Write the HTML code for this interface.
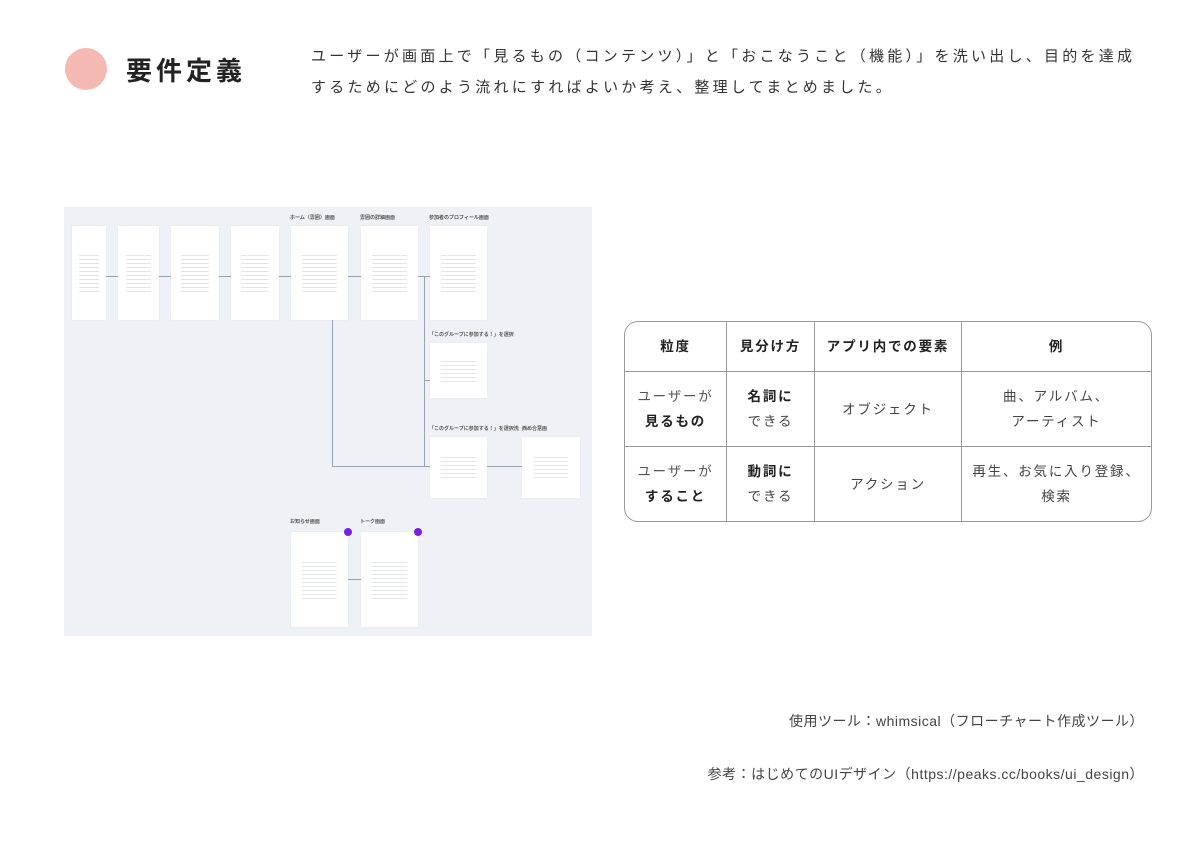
<!DOCTYPE html>
<html><head><meta charset="utf-8"><style>
body{margin:0;width:1200px;height:848px;background:#fff;position:relative;overflow:hidden;font-family:"Liberation Sans","Noto Sans CJK JP",sans-serif;color:#333}
.a{position:absolute}
.circ{left:65px;top:48px;width:42px;height:42px;border-radius:50%;background:#f4b9b2}
.title{left:126px;top:53px;font-size:26px;font-weight:bold;letter-spacing:4px;color:#222;line-height:36px}
.lead{left:311px;top:41px;font-size:15px;letter-spacing:3.25px;line-height:31px;color:#333;white-space:nowrap}
.dia{left:64px;top:207px;width:528px;height:429px;background:#eef2f6}
.card{position:absolute;background:#fff;box-shadow:0 0 1px rgba(0,0,0,.08)}
.card::after{content:"";position:absolute;left:20%;right:20%;top:28%;bottom:28%;background:repeating-linear-gradient(#fff 0 3px,#e2e4e8 3px 4px)}
.lbl{position:absolute;font-size:5px;color:#555;font-weight:bold}
.ln{position:absolute;background:#9aa3ad}
.dot{position:absolute;width:8px;height:8px;border-radius:50%;background:#7b1fe0}
table{position:absolute;left:624px;top:321px;width:528px;border-collapse:separate;border-spacing:0;border:1px solid #999;border-radius:14px;font-size:13.5px;letter-spacing:1.8px;table-layout:fixed}
td{border-right:1px solid #999;border-bottom:1px solid #999;text-align:center;line-height:25px;color:#444;padding:0}
tr td:last-child{border-right:none}
tr:last-child td{border-bottom:none}
.h td{height:49px;font-weight:bold;color:#222}
.r td{height:74px}
.foot{right:56px;font-size:14px;color:#444;letter-spacing:.5px;white-space:nowrap}
</style></head><body>
<div class="a circ"></div>
<div class="a title">要件定義</div>
<div class="a lead">ユーザーが画面上で「見るもの（コンテンツ）」と「おこなうこと（機能）」を洗い出し、目的を達成<br>するためにどのよう流れにすればよいか考え、整理してまとめました。</div>
<div class="a dia">
 <div class="ln" style="left:42px;top:69px;width:200px;height:1px"></div>
 <div class="ln" style="left:284px;top:69px;width:90px;height:1px"></div>
 <div class="ln" style="left:268px;top:113px;width:1px;height:147px"></div>
 <div class="ln" style="left:268px;top:259px;width:98px;height:1px"></div>
 <div class="ln" style="left:360px;top:69px;width:1px;height:191px"></div>
 <div class="ln" style="left:360px;top:173px;width:6px;height:1px"></div>
 <div class="ln" style="left:423px;top:259px;width:35px;height:1px"></div>
 <div class="ln" style="left:284px;top:372px;width:14px;height:1px"></div>
 <div class="card" style="left:8px;top:19px;width:34px;height:94px"></div>
 <div class="card" style="left:54px;top:19px;width:41px;height:94px"></div>
 <div class="card" style="left:107px;top:19px;width:48px;height:94px"></div>
 <div class="card" style="left:167px;top:19px;width:48px;height:94px"></div>
 <div class="card" style="left:227px;top:19px;width:57px;height:94px"></div>
 <div class="card" style="left:297px;top:19px;width:57px;height:94px"></div>
 <div class="card" style="left:366px;top:19px;width:57px;height:94px"></div>
 <div class="card" style="left:366px;top:136px;width:57px;height:55px"></div>
 <div class="card" style="left:366px;top:230px;width:57px;height:61px"></div>
 <div class="card" style="left:458px;top:230px;width:58px;height:61px"></div>
 <div class="card" style="left:227px;top:325px;width:57px;height:95px"></div>
 <div class="card" style="left:297px;top:325px;width:57px;height:95px"></div>
 <div class="dot" style="left:280px;top:321px"></div>
 <div class="dot" style="left:350px;top:321px"></div>
 <div class="lbl" style="left:226px;top:7px">ホーム（雰囲）画面</div>
 <div class="lbl" style="left:296px;top:7px">雰囲の詳細画面</div>
 <div class="lbl" style="left:365px;top:7px">参加者のプロフィール画面</div>
 <div class="lbl" style="left:365px;top:124px">「このグループに参加する！」を選択</div>
 <div class="lbl" style="left:365px;top:218px">「このグループに参加する！」を選択洗</div>
 <div class="lbl" style="left:458px;top:218px">西め合意画</div>
 <div class="lbl" style="left:226px;top:311px">お知らせ画面</div>
 <div class="lbl" style="left:296px;top:311px">トーク画面</div>
</div>
<table>
<tr class="h"><td style="width:101px">粒度</td><td style="width:87px">見分け方</td><td style="width:146px">アプリ内での要素</td><td>例</td></tr>
<tr class="r"><td><span style="color:#555">ユーザーが</span><br><b style="color:#222">見るもの</b></td><td><b style="color:#222">名詞に</b><br>できる</td><td>オブジェクト</td><td>曲、アルバム、<br>アーティスト</td></tr>
<tr class="r"><td><span style="color:#555">ユーザーが</span><br><b style="color:#222">すること</b></td><td><b style="color:#222">動詞に</b><br>できる</td><td>アクション</td><td>再生、お気に入り登録、<br>検索</td></tr>
</table>
<div class="a foot" style="top:711px">使用ツール：whimsical（フローチャート作成ツール）</div>
<div class="a foot" style="top:764px">参考：はじめてのUIデザイン（https://peaks.cc/books/ui_design）</div>
</body></html>
